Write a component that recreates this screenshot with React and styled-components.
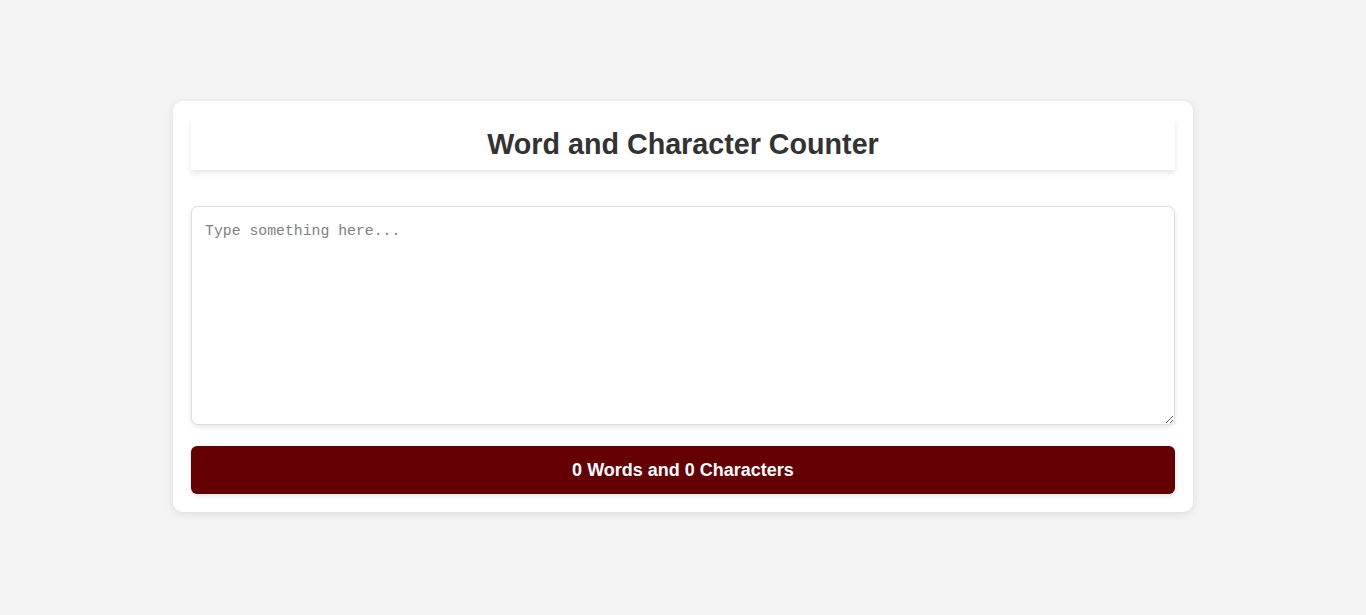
import { useState } from 'react'
import styled, { createGlobalStyle } from 'styled-components'

const Global = createGlobalStyle`
  body{
    margin:0;
    background-color:#f4f4f4;
    font-family:"Liberation Sans", Arial, sans-serif;
  }
`;

const Page = styled.main`
  min-height:100vh;
  display:flex;
  align-items:center;
  justify-content:center;
  box-sizing:border-box;
  padding-bottom:2px;
`;

const Card = styled.section`
  width:1020px;
  box-sizing:border-box;
  background-color:#fff;
  border-radius:10px;
  padding:18px;
  box-shadow:0 2px 8px rgba(0,0,0,0.1);
  display:flex;
  flex-direction:column;
`;

const Header = styled.header`
  height:51px;
  display:flex;
  align-items:center;
  justify-content:center;
  box-shadow:0 3px 5px rgba(0,0,0,0.1);
  margin-bottom:36px;
`;

const Title = styled.h1`
  margin:0;
  font-size:28.7px;
  font-weight:bold;
  color:#333;
`;

const Area = styled.textarea`
  height:219px;
  box-sizing:border-box;
  padding:16px 13px 14px;
  border:1px solid #ddd;
  border-radius:7px;
  box-shadow:0 2px 5px rgba(0,0,0,0.1);
  font-family:"Liberation Mono", monospace;
  font-size:14.8px;
  color:#333;
  resize:vertical;
  outline:none;
  &::placeholder{
    color:#808080;
  }
`;

const Result = styled.div`
  margin-top:21px;
  height:48px;
  border-radius:6px;
  background-color:#640003;
  color:#fff;
  font-size:18px;
  font-weight:bold;
  display:flex;
  align-items:center;
  justify-content:center;
  box-shadow:0 2px 5px rgba(0,0,0,0.1);
`;

export default function App(){
  const [text, setText] = useState('')
  const words = text.trim() ? text.trim().split(/\s+/).length : 0
  return(
    <>
    <Global/>
    <Page>
      <Card>
        <Header>
          <Title>Word and Character Counter</Title>
        </Header>
        <Area placeholder="Type something here..." value={text} onChange={e=>setText(e.target.value)}/>
        <Result>{words} Words and {text.length} Characters</Result>
      </Card>
    </Page>
    </>
  )
}
